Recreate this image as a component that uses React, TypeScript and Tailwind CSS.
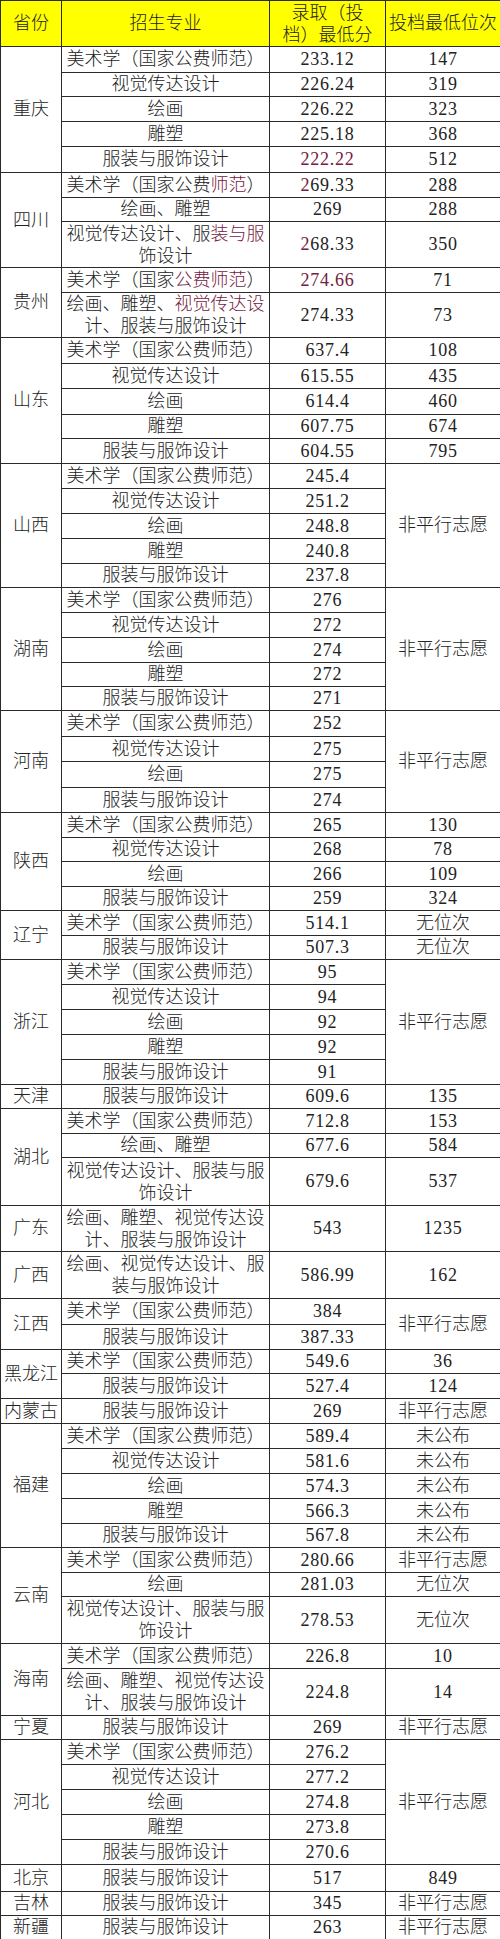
import React from "react";

type Row = [string, string, string, number];
type Group = { p: string; rows: Row[]; merged?: string };

const FS = "美术学（国家公费师范）";
const SJ = "视觉传达设计";
const HH = "绘画";
const DS = "雕塑";
const FZ = "服装与服饰设计";
const FP = "非平行志愿";

const groups: Group[] = [
  { p: "重庆", rows: [[FS, "233.12", "147", 26], [SJ, "226.24", "319", 24], [HH, "226.22", "323", 25], [DS, "225.18", "368", 25], [FZ, "{222.22}", "512", 26]] },
  { p: "四川", rows: [["美术学（国家公费{师范}）", "{2}69.33", "288", 25], ["绘画、雕塑", "269", "288", 24], ["视觉传达设计、服{装与服}饰设计", "{2}68.33", "350", 46]] },
  { p: "贵州", rows: [["美术学（国家{公费师范}）", "{274.66}", "71", 25], ["绘画、雕塑、{视觉传达设}计、服装与服饰设计", "274.33", "73", 45]] },
  { p: "山东", rows: [[FS, "637.4", "108", 26], [SJ, "615.55", "435", 25], [HH, "614.4", "460", 26], [DS, "607.75", "674", 24], [FZ, "604.55", "795", 25]] },
  { p: "山西", merged: FP, rows: [[FS, "245.4", "", 25], [SJ, "251.2", "", 25], [HH, "248.8", "", 25], [DS, "240.8", "", 25], [FZ, "237.8", "", 24]] },
  { p: "湖南", merged: FP, rows: [[FS, "276", "", 25], [SJ, "272", "", 25], [HH, "274", "", 25], [DS, "272", "", 24], [FZ, "271", "", 24]] },
  { p: "河南", merged: FP, rows: [[FS, "252", "", 26], [SJ, "275", "", 25], [HH, "275", "", 26], [FZ, "274", "", 25]] },
  { p: "陕西", rows: [[FS, "265", "130", 25], [SJ, "268", "78", 24], [HH, "266", "109", 25], [FZ, "259", "324", 24]] },
  { p: "辽宁", rows: [[FS, "514.1", "无位次", 25], [FZ, "507.3", "无位次", 24]] },
  { p: "浙江", merged: FP, rows: [[FS, "95", "", 25], [SJ, "94", "", 25], [HH, "92", "", 25], [DS, "92", "", 25], [FZ, "91", "", 25]] },
  { p: "天津", rows: [[FZ, "609.6", "135", 24]] },
  { p: "湖北", rows: [[FS, "712.8", "153", 25], ["绘画、雕塑", "677.6", "584", 24], ["视觉传达设计、服装与服饰设计", "679.6", "537", 48]] },
  { p: "广东", rows: [["绘画、雕塑、视觉传达设计、服装与服饰设计", "543", "1235", 46]] },
  { p: "广西", rows: [["绘画、视觉传达设计、服装与服饰设计", "586.99", "162", 47]] },
  { p: "江西", merged: FP, rows: [[FS, "384", "", 26], [FZ, "387.33", "", 25]] },
  { p: "黑龙江", rows: [[FS, "549.6", "36", 24], [FZ, "527.4", "124", 25]] },
  { p: "内蒙古", rows: [[FZ, "269", FP, 25]] },
  { p: "福建", rows: [[FS, "589.4", "未公布", 25], [SJ, "581.6", "未公布", 25], [HH, "574.3", "未公布", 25], [DS, "566.3", "未公布", 25], [FZ, "567.8", "未公布", 24]] },
  { p: "云南", rows: [[FS, "280.66", FP, 25], [HH, "281.03", "无位次", 24], ["视觉传达设计、服装与服饰设计", "278.53", "无位次", 47]] },
  { p: "海南", rows: [[FS, "226.8", "10", 25], ["绘画、雕塑、视觉传达设计、服装与服饰设计", "224.8", "14", 47]] },
  { p: "宁夏", rows: [[FZ, "269", FP, 24]] },
  { p: "河北", merged: FP, rows: [[FS, "276.2", "", 25], [SJ, "277.2", "", 25], [HH, "274.8", "", 25], [DS, "273.8", "", 25], [FZ, "270.6", "", 25]] },
  { p: "北京", rows: [[FZ, "517", "849", 27]] },
  { p: "吉林", rows: [[FZ, "345", FP, 24]] },
  { p: "新疆", rows: [[FZ, "263", FP, 24]] },
];

const heightClass: Record<number, string> = {
  24: "h-[24px]",
  25: "h-[25px]",
  26: "h-[26px]",
  27: "h-[27px]",
  45: "h-[45px]",
  46: "h-[46px]",
  47: "h-[47px]",
  48: "h-[48px]",
};

function Txt({ s }: { s: string }) {
  const parts = s.split(/(\{[^}]*\})/).filter((x) => x.length > 0);
  const num = /^[\d.]+$/.test(s.replace(/[{}]/g, ""));
  return (
    <>
      {parts.map((part, i) => {
        const red = part.startsWith("{");
        const t = red ? part.slice(1, -1) : part;
        const cls = (red ? "text-[#74203f] " : "") + (num ? "tracking-[0.75px]" : "");
        return (
          <span key={i} className={cls}>
            {t}
          </span>
        );
      })}
    </>
  );
}

const cell = "border border-[#2a2a2a] p-0 text-center align-middle";

export default function App() {
  return (
    <div className="w-[500px] bg-white text-[#222222] font-light text-[18px] leading-[23px] font-['Liberation_Serif','Noto_Sans_CJK_SC',serif]">
      <table className="w-[500px] table-fixed border-collapse">
        <colgroup>
          <col className="w-[61px]" />
          <col className="w-[208px]" />
          <col className="w-[116px]" />
          <col className="w-[115px]" />
        </colgroup>
        <thead>
          <tr className="h-[46px] bg-[#ffff00]">
            <th className={cell + " font-light"}>省份</th>
            <th className={cell + " font-light"}>招生专业</th>
            <th className={cell + " font-light leading-[22px]"}>
              <div>录取（投</div>
              <div>档）最低分</div>
            </th>
            <th className={cell + " font-light"}>投档最低位次</th>
          </tr>
        </thead>
        <tbody>
          {groups.map((g) =>
            g.rows.map((r, i) => {
              const h = r[3];
              const two = h > 40;
              return (
                <tr key={g.p + i} className={heightClass[h]}>
                  {i === 0 && (
                    <td rowSpan={g.rows.length} className={cell}>
                      {g.p}
                    </td>
                  )}
                  <td className={cell + " px-[2px]" + (two ? " leading-[22px]" : "")}>
                    <Txt s={r[0]} />
                  </td>
                  <td className={cell}>
                    <Txt s={r[1]} />
                  </td>
                  {g.merged ? (
                    i === 0 && (
                      <td rowSpan={g.rows.length} className={cell}>
                        {g.merged}
                      </td>
                    )
                  ) : (
                    <td className={cell}>
                      <Txt s={r[2]} />
                    </td>
                  )}
                </tr>
              );
            })
          )}
        </tbody>
      </table>
    </div>
  );
}
